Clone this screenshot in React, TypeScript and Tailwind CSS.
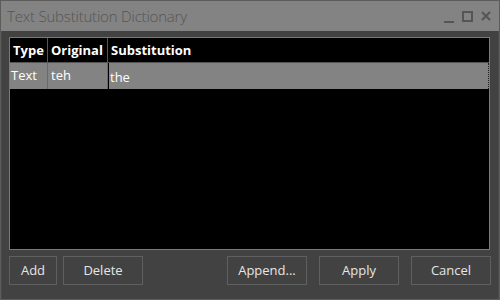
import React from "react";

const font = { fontFamily: '"Segoe UI", "Open Sans", "Noto Sans", sans-serif' };

function Btn({ label, w }: { label: string; w: string }) {
  return (
    <button
      className={`h-[29px] ${w} shrink-0 border border-[#5f5f5f] bg-[#424242] text-[13px] text-[#e6e6e6] flex items-center justify-center`}
    >
      {label}
    </button>
  );
}

export default function App() {
  return (
    <div className="w-[500px] h-[300px] bg-[#5c5c5c] p-px flex flex-col" style={font}>
      <div className="h-[30px] bg-[#838383] flex items-center pl-[6px] pr-[7px]">
        <span className="text-[15px] font-light text-[#555555] tracking-[-0.2px] flex-1">Text Substitution Dictionary</span>
        <svg width="50" height="14" viewBox="0 0 50 14" className="mt-[2px]">
          <rect x="2" y="11" width="10" height="2" fill="#555555" />
          <rect x="21" y="2" width="9" height="9" fill="none" stroke="#555555" strokeWidth="2" />
          <path d="M40 2 L48 10 M48 2 L40 10" stroke="#555555" strokeWidth="2" />
        </svg>
      </div>
      <div className="flex-1 bg-[#424242] flex flex-col pt-[6px] pl-[7px] pr-[7px] pb-[14px] gap-[6px] border-l border-r border-[#4a4a4a]">
        <div className="flex-1 mr-px bg-black border border-[#7a7a7a] flex flex-col">
          <div className="h-[25px] flex border-b border-[#555555] text-[13px] font-bold text-white">
            <div className="w-[38px] border-r border-[#555555] pl-[3px] pt-[2px] flex items-center">Type</div>
            <div className="w-[60px] border-r border-[#555555] pl-[3px] pt-[2px] flex items-center">Original</div>
            <div className="flex-1 pl-[3px] pt-[2px] flex items-center">Substitution</div>
          </div>
          <div className="h-[26px] flex text-[13px] text-white bg-[#838383]">
            <div className="w-[38px] border-r border-[#6a6a6a] pl-[1px] flex items-center">Text</div>
            <div className="w-[60px] border-r border-[#6a6a6a] pl-[3px] flex items-center">teh</div>
            <div className="flex-1 flex border-l border-black">
              <div className="flex-1 pl-[1px] pt-[3px] flex items-center">the</div>
              <div className="w-px border-r border-dotted border-[#222222]" />
            </div>
          </div>
        </div>
        <div className="flex">
          <Btn label="Add" w="w-[48px]" />
          <div className="w-[6px] shrink-0" />
          <Btn label="Delete" w="w-[80px]" />
          <div className="flex-1" />
          <Btn label="Append..." w="w-[80px]" />
          <div className="w-[12px] shrink-0" />
          <Btn label="Apply" w="w-[80px]" />
          <div className="w-[12px] shrink-0" />
          <Btn label="Cancel" w="w-[80px]" />
        </div>
      </div>
    </div>
  );
}
